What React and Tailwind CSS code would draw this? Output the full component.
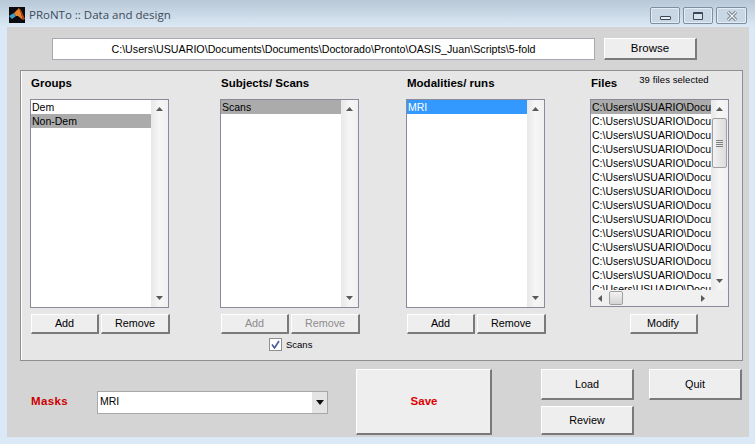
import React from 'react';

const font = "font-['Liberation_Sans',Arial,sans-serif]";

// Win7-era MATLAB push button
const Btn = ({ className = '', text = 'text-black', children }) => (
  <div className={`flex items-center justify-center bg-[#eeeeee] border border-t-white border-l-white border-r-[#7a7a7a] border-b-[#7a7a7a] border-r-2 border-b-2 ${text} ${className}`}>
    {children}
  </div>
);

const Arrow = ({ dir }) => {
  const pts = {
    up: '0,4 7,4 3.5,0',
    down: '0,0 7,0 3.5,4',
    left: '4,0 4,7 0,3.5',
    right: '0,0 0,7 4,3.5',
  }[dir];
  const vertical = dir === 'up' || dir === 'down';
  return (
    <svg width={vertical ? 7 : 4} height={vertical ? 4 : 7} viewBox={vertical ? '0 0 7 4' : '0 0 4 7'}>
      <polygon points={pts} fill="#5a5a5a" />
    </svg>
  );
};

const VScroll = ({ thumb }) => (
  <div className="w-[17px] shrink-0 flex flex-col items-center justify-between bg-gradient-to-r from-[#e8e8e8] via-[#f6f6f6] to-[#f0f0f0] py-[7px] relative">
    <Arrow dir="up" />
    {thumb && (
      <div className="absolute top-[18px] left-[1px] w-[15px] h-[50px] bg-gradient-to-r from-[#f2f2f2] to-[#dcdcdc] border border-[#a0a0a0] rounded-[2px] flex flex-col items-center justify-center gap-[1px]">
        <div className="w-[7px] h-[1px] bg-[#808080]" />
        <div className="w-[7px] h-[1px] bg-[#808080]" />
        <div className="w-[7px] h-[1px] bg-[#808080]" />
        <div className="w-[7px] h-[1px] bg-[#808080]" />
      </div>
    )}
    <Arrow dir="down" />
  </div>
);

const ListBox = ({ items }) => (
  <div className="w-[139px] h-[209px] border border-[#8a8a9a] bg-white flex overflow-hidden">
    <div className="flex-1 min-w-0">
      {items.map((it) => (
        <div
          key={it.label}
          className={`h-[14px] leading-[14px] pl-[1px] text-[10.5px] ${it.sel === 'blue' ? 'bg-[#3399ff] text-white' : it.sel ? 'bg-[#ababab] text-black' : 'text-black'}`}
        >
          {it.label}
        </div>
      ))}
    </div>
    <VScroll />
  </div>
);

const Column = ({ title, items, disabled, className = '', children }) => (
  <div className={`w-[140px] shrink-0 ${className}`}>
    <div className="h-[28px] pl-[1px] pt-[4px] font-bold text-[11.5px] text-black">{title}</div>
    <ListBox items={items} />
    <div className="flex gap-[2px] mt-[6px] pl-[1px]">
      <Btn className="w-[68px] h-[20px] text-[10.8px]" text={disabled ? 'text-[#8c8c8c]' : 'text-black'}>Add</Btn>
      <Btn className="w-[69px] h-[20px] text-[10.8px]" text={disabled ? 'text-[#8c8c8c]' : 'text-black'}>Remove</Btn>
    </div>
    {children}
  </div>
);

const filePath = 'C:\\Users\\USUARIO\\Documents\\Documents\\Doctorado\\Pronto\\OASIS_Juan\\Scripts\\5-fold';
const fileRows = Array.from({ length: 14 }, (_, i) => i);

const FilesColumn = () => (
  <div className="w-[139px] shrink-0">
    <div className="h-[28px] flex">
      <div className="pl-[1px] pt-[4px] font-bold text-[11.5px] text-black">Files</div>
      <div className="ml-[22px] pt-[2px] text-[9.5px] tracking-[0.08px] text-black">39 files selected</div>
    </div>
    <div className="w-[139px] h-[208px] border border-[#8a8a9a] bg-white flex flex-col overflow-hidden">
      <div className="flex flex-1 min-h-0">
        <div className="flex-1 min-w-0 overflow-hidden">
          {fileRows.map((i) => (
            <div key={i} className={`h-[14px] leading-[14px] pl-[1px] text-[10.5px] whitespace-nowrap ${i === 0 ? 'bg-[#ababab]' : ''}`}>
              C:\Users\USUARIO\Docu
            </div>
          ))}
        </div>
        <VScroll thumb />
      </div>
      <div className="h-[16px] shrink-0 flex items-center bg-[#f0f0f0]">
        <div className="ml-[7px]"><Arrow dir="left" /></div>
        <div className="ml-[7px] w-[14px] h-[14px] bg-gradient-to-b from-[#f2f2f2] to-[#d4d4d4] border border-[#a0a0a0] rounded-[2px]" />
        <div className="ml-[78px]"><Arrow dir="right" /></div>
      </div>
    </div>
    <div className="mt-[7px] flex justify-center pl-[8px]">
      <Btn className="w-[68px] h-[20px] text-[10.8px]">Modify</Btn>
    </div>
  </div>
);

const MatlabLogo = () => (
  <svg width="16" height="16" viewBox="0 0 16 16" className="shrink-0">
    <rect width="16" height="16" fill="#0c0c10" />
    <polygon points="0,9 5,6 7,9 3,12" fill="#3f9fc9" />
    <polygon points="5,6 10,1 12,6 14,13 9,9 7,9" fill="#e8842a" />
    <polygon points="10,1 12,6 14,13 16,12 12,3" fill="#b5471c" />
  </svg>
);

const WinBtn = ({ children, className = '' }) => (
  <div className={`h-[17px] flex items-center justify-center border border-[#7f8ea0] rounded-[2px] bg-[#c9d7e4] shadow-[inset_0_0_0_1px_#e4edf5] ${className}`}>
    {children}
  </div>
);

export default function App() {
  return (
    <div className={`w-[755px] h-[444px] overflow-hidden bg-[#dbe9f6] ${font}`}>
      {/* title bar */}
      <div className="h-[27px] flex items-start bg-gradient-to-b from-[#b9c8d6] to-[#dbe9f6]">
        <div className="ml-[9px] mt-[7px]"><MatlabLogo /></div>
        <div className="ml-[4px] mt-[6px] font-['Open_Sans',sans-serif] text-[11.5px] leading-[18px] text-[#3c4a5a]">PRoNTo :: Data and design</div>
        <div className="ml-auto mr-[8px] mt-[7px] flex gap-[3px]">
          <WinBtn className="w-[30px]"><div className="w-[11px] h-[4px] border border-[#3a4654] bg-[#e8eef4] mt-[5px] rounded-[1px]" /></WinBtn>
          <WinBtn className="w-[30px]"><div className="w-[10px] h-[8px] border border-[#3a4654] border-t-2 bg-[#d8e2ec] rounded-[1px]" /></WinBtn>
          <WinBtn className="w-[31px]">
            <svg width="12" height="10" viewBox="0 0 12 10">
              <path d="M2 1 L10 9 M10 1 L2 9" stroke="#5a6672" strokeWidth="3" />
              <path d="M2 1 L10 9 M10 1 L2 9" stroke="#f2f5f8" strokeWidth="1.4" />
            </svg>
          </WinBtn>
        </div>
      </div>

      {/* client area */}
      <div className="mx-[7px] w-[742px] h-[410px] bg-[#d4d4d4] pt-[11px] pl-[13px]">
        <div className="flex ml-[32px] h-[22px]">
          <div className="w-[543px] h-[22px] bg-white border border-[#a8a8b0] flex items-center justify-center text-[10.7px] text-black">
            {filePath}
          </div>
          <Btn className="w-[93px] h-[22px] ml-[9px] text-[11.5px]">Browse</Btn>
        </div>

        <div className="mt-[10px] w-[723px] h-[291px] bg-[#e6e6e6] border border-[#8f8f8f] shadow-[inset_1px_0_0_#ffffff] flex pl-[9px]">
          <Column title="Groups" items={[{ label: 'Dem' }, { label: 'Non-Dem', sel: 'gray' }]} />
          <Column
            className="ml-[50px]"
            title="Subjects/ Scans"
            disabled
            items={[{ label: 'Scans', sel: 'gray' }]}
          >
            <div className="mt-[4px] ml-[49px] flex items-center gap-[4px]">
              <div className="w-[13px] h-[13px] bg-white border border-[#8e8f8f] flex items-center justify-center">
                <svg width="9" height="9" viewBox="0 0 9 9"><path d="M1 4.5 L3.5 8 L8 1" fill="none" stroke="#4a5a9c" strokeWidth="1.6" /></svg>
              </div>
              <span className="text-[9.5px] leading-[12px] text-black">Scans</span>
            </div>
          </Column>
          <Column className="ml-[46px]" title="Modalities/ runs" items={[{ label: 'MRI', sel: 'blue' }]} />
          <div className="ml-[44px]"><FilesColumn /></div>
        </div>

        {/* bottom controls */}
        <div className="flex mt-[8px]">
          <div className="w-[336px] flex items-center pl-[11px] h-[66px]">
            <span className="w-[66px] text-[11.5px] font-bold tracking-[0.4px] text-[#cc0000]">Masks</span>
            <div className="w-[231px] h-[23px] bg-white border border-[#a8a8a8] flex items-center justify-between">
              <span className="pl-[2px] text-[10.5px] text-black">MRI</span>
              <div className="w-[15px] h-full bg-[#e4e4e4] flex items-center justify-center">
                <svg width="8" height="5" viewBox="0 0 8 5"><polygon points="0,0 8,0 4,5" fill="#111111" /></svg>
              </div>
            </div>
          </div>
          <Btn className="w-[136px] h-[66px] pl-[1px] font-bold text-[11.5px]" text="text-[#e00000]">Save</Btn>
          <div className="ml-[49px] flex flex-col gap-[6px]">
            <Btn className="w-[93px] h-[31px] text-[10.8px]">Load</Btn>
            <Btn className="w-[93px] h-[29px] text-[10.8px]">Review</Btn>
          </div>
          <Btn className="ml-[15px] w-[93px] h-[31px] text-[10.8px]">Quit</Btn>
        </div>
      </div>
    </div>
  );
}
